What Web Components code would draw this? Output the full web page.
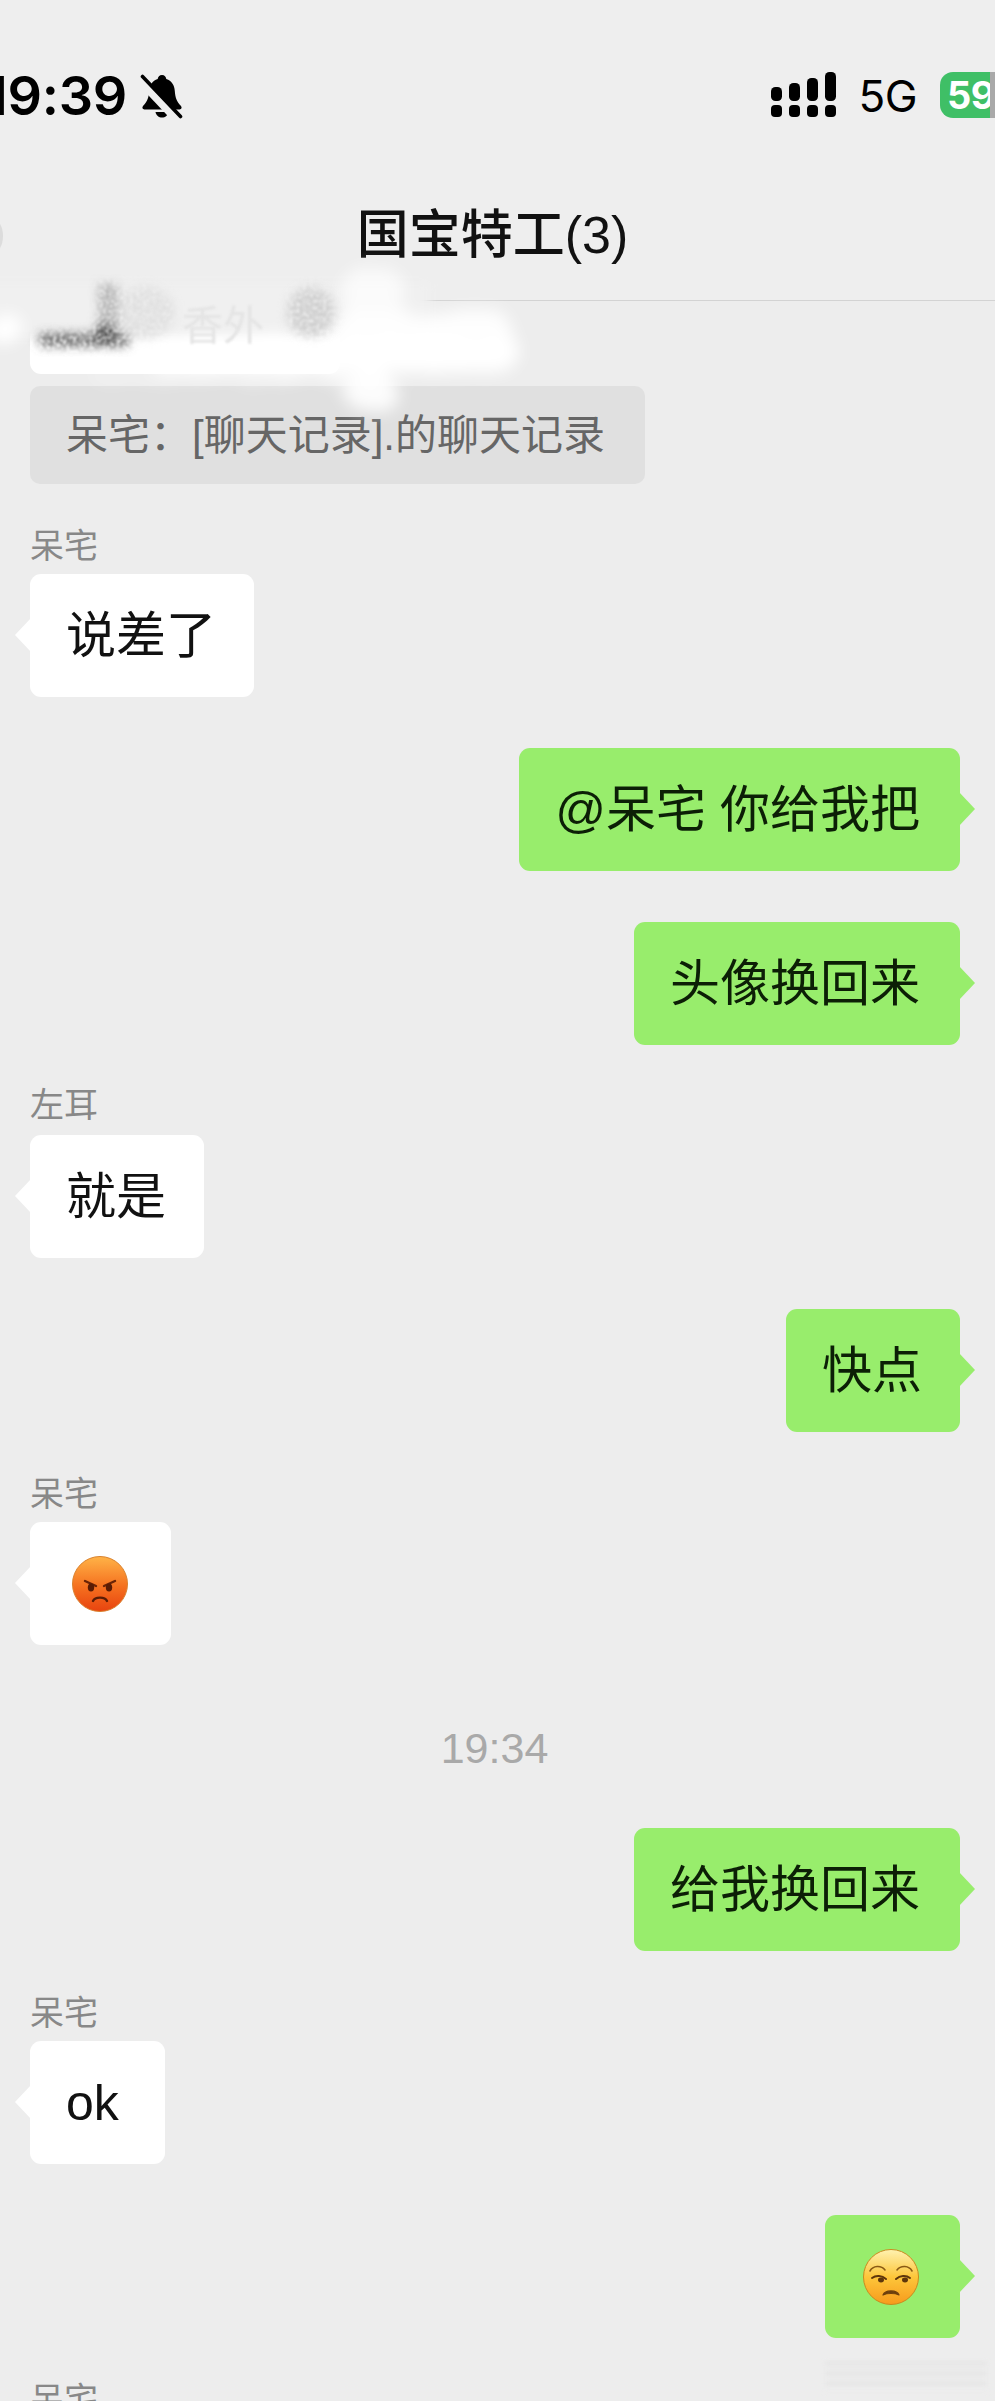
<!DOCTYPE html>
<html lang="zh">
<head>
<meta charset="utf-8">
<title>国宝特工(3)</title>
<style>
  html, body { margin: 0; background: #ededed; }
  body { font-family: "Liberation Sans", "Noto Sans CJK SC", sans-serif; }
</style>
</head>
<body>
<chat-screen>
  <status-bar slot="top"></status-bar>
  <nav-title slot="top">国宝特工(3)</nav-title>

  <chat-bubble from="them" class="notail" style="--h:73px;--w:310px;margin-top:0;height:73px"></chat-bubble>
  <quote-line>呆宅：[聊天记录].的聊天记录</quote-line>

  <sender-name>呆宅</sender-name>
  <chat-bubble from="them" class="first">说差了</chat-bubble>

  <chat-bubble from="me">@呆宅 你给我把</chat-bubble>
  <chat-bubble from="me">头像换回来</chat-bubble>

  <sender-name style="margin-top:40px">左耳</sender-name>
  <chat-bubble from="them" class="first" style="margin-top:10px">就是</chat-bubble>

  <chat-bubble from="me" style="--w:174px;--pl:36px">快点</chat-bubble>

  <sender-name>呆宅</sender-name>
  <chat-bubble from="them" class="first" style="--w:141px"><face-emoji kind="angry"></face-emoji></chat-bubble>

  <time-mark>19:34</time-mark>

  <chat-bubble from="me" style="margin-top:57px">给我换回来</chat-bubble>

  <sender-name>呆宅</sender-name>
  <chat-bubble from="them" class="first" style="--w:135px">ok</chat-bubble>

  <chat-bubble from="me" style="--w:135px"><face-emoji kind="unamused"></face-emoji></chat-bubble>

  <sender-name>呆宅</sender-name>
</chat-screen>

<script>
const CJK = '"Liberation Sans", "Noto Sans CJK SC", sans-serif';

class ChatScreen extends HTMLElement {
  constructor() {
    super();
    this.attachShadow({ mode: "open" });
    this.shadowRoot.innerHTML = `
      <style>
        :host { display:block; position:relative; width:995px; height:2401px; overflow:hidden; background:#ededed; font-family:${CJK}; }
        .back { position:absolute; left:-17px; top:219px; width:20px; height:34px; border-radius:50%; background:#dcdcdc; }
        .list { display:flex; flex-direction:column; align-items:stretch; padding:0 20px 0 30px; }
        .smudge { position:absolute; left:0; top:200px; width:620px; height:230px; pointer-events:none; }
        .ghost { position:absolute; left:182px; top:292px; font-size:41px; color:#e4e4e4; filter:blur(1px); white-space:nowrap; }
        .footmark { position:absolute; left:825px; top:2362px; width:162px; height:30px; background:repeating-linear-gradient(#e0e0e0 0 3px, #ececec 3px 10px); filter:blur(2px); opacity:.7; }
      </style>
      <div class="back"></div>
      <slot name="top"></slot>
      <div class="list"><slot></slot></div>
      <svg class="smudge" viewBox="0 200 620 230" xmlns="http://www.w3.org/2000/svg">
        <defs>
          <filter id="speck" x="-15%" y="-15%" width="130%" height="130%">
            <feGaussianBlur in="SourceGraphic" stdDeviation="5" result="b"/>
            <feTurbulence type="fractalNoise" baseFrequency=".3" numOctaves="2" seed="7" result="n"/>
            <feColorMatrix in="n" type="matrix" values="0 0 0 0 0  0 0 0 0 0  0 0 0 0 0  0 0 0 2.500 -.500" result="mask"/>
            <feComposite in="b" in2="mask" operator="in"/>
            <feGaussianBlur stdDeviation="1"/>
          </filter>
          <filter id="soft" x="-30%" y="-80%" width="160%" height="260%">
            <feTurbulence type="fractalNoise" baseFrequency=".04" numOctaves="3" seed="9" result="n"/>
            <feDisplacementMap in="SourceGraphic" in2="n" scale="18" xChannelSelector="R" yChannelSelector="G"/>
            <feGaussianBlur stdDeviation="8"/>
          </filter>
          <filter id="haze"><feGaussianBlur stdDeviation="5"/></filter>
        </defs>
        <rect x="-20" y="282" width="450" height="56" fill="#f0f0f0" filter="url(#haze)"/>
        <g filter="url(#soft)" fill="#fff">
          <rect x="-12" y="318" width="36" height="24" rx="12"/>
          <rect x="150" y="336" width="370" height="36" rx="16"/>
          <rect x="330" y="312" width="180" height="40" rx="18" opacity=".9"/>
          <ellipse cx="372" cy="292" rx="34" ry="26" opacity=".7"/>
          <ellipse cx="372" cy="392" rx="28" ry="24" opacity=".9"/>
          <rect x="90" y="372" width="300" height="10" opacity=".35"/>
        </g>
        <rect x="36" y="345" width="290" height="18" fill="#fff" filter="url(#haze)"/>
        <g filter="url(#speck)">
          <ellipse cx="145" cy="312" rx="30" ry="26" fill="#e0e0e0"/>
          <rect x="98" y="284" width="20" height="48" fill="#b4b4b4"/>
          <rect x="38" y="333" width="92" height="14" rx="6" fill="#6a6a6a"/>
          <rect x="96" y="324" width="20" height="20" fill="#444"/>
          <ellipse cx="311" cy="312" rx="24" ry="25" fill="#cfcfcf"/>
        </g>
      </svg>
      <div class="ghost">香外</div>
      <div class="footmark"></div>
    `;
  }
}

class StatusBar extends HTMLElement {
  constructor() {
    super();
    this.attachShadow({ mode: "open" });
    this.shadowRoot.innerHTML = `
      <style>
        :host { display:flex; align-items:center; height:190px; box-sizing:border-box; padding-top:2px; color:#000; background:#eee; font-family:Inter, sans-serif; }
        .clock { font-size:54px; font-weight:600; line-height:1; margin-left:-15px; letter-spacing:-.3px; }
        .bell { width:44px; height:46px; margin-left:13px; }
        .right { margin-left:auto; display:flex; align-items:center; overflow:hidden; margin-top:-2px; }
        .signal { width:66px; height:46px; }
        .net { font-size:44px; line-height:1; margin:2px 23px 0 21px; letter-spacing:-.5px; }
        .batt { width:55px; height:46px; flex:none; box-sizing:border-box; background:#3fbf66; border-radius:13px 0 0 13px; border-right:5px solid #a9a9a9; color:#fff; font-size:38px; font-weight:700; line-height:46px; padding-left:7px; overflow:hidden; white-space:nowrap; letter-spacing:-.5px; }
      </style>
      <span class="clock">19:39</span>
      <svg class="bell" viewBox="0 0 44 46" xmlns="http://www.w3.org/2000/svg">
        <path d="M22 2c2.600 0 4 1.800 4.300 4 5.400 1.700 8 6 8.500 12 .5 6 1.500 10.500 6.200 15 1.200 1.500.6 3.400-1.400 3.400H4.400C2.400 36.400 1.800 34.500 3 33c4.700-4.500 5.700-9 6.200-15C9.700 12 12.300 7.700 17.700 6 18 3.800 19.400 2 22 2z" fill="#000"/>
        <path d="M15.500 39h13c-.6 3.500-3.200 5.500-6.500 5.500s-5.900-2-6.500-5.500z" fill="#000"/>
        <path d="M0 7l36 38" stroke="#eee" stroke-width="9" fill="none"/>
        <path d="M2.500 3.500l38 40" stroke="#000" stroke-width="3.600" stroke-linecap="round" fill="none"/>
      </svg>
      <div class="right">
        <svg class="signal" viewBox="0 0 66 46" xmlns="http://www.w3.org/2000/svg" fill="#000">
          <rect x="0" y="33" width="11" height="12" rx="4"/><rect x="18" y="33" width="11" height="12" rx="4"/><rect x="36" y="33" width="11" height="12" rx="4"/><rect x="54" y="33" width="11" height="12" rx="4"/>
          <rect x="0" y="15" width="11" height="14" rx="4.500"/><rect x="18" y="11" width="11" height="18" rx="4.500"/><rect x="36" y="6" width="11" height="23" rx="4.500"/><rect x="54" y="0" width="11" height="29" rx="4.500"/>
        </svg>
        <span class="net">5G</span>
        <span class="batt">59</span>
      </div>
    `;
  }
}

class NavTitle extends HTMLElement {
  constructor() {
    super();
    this.attachShadow({ mode: "open" });
    this.shadowRoot.innerHTML = `
      <style>
        :host { display:flex; justify-content:center; box-sizing:border-box; height:111px; padding:15px 10px 0 0; border-bottom:1px solid #d3d3d3; background:#eee; color:#111; font-size:52px; font-weight:500; line-height:60px; }
      </style>
      <slot></slot>
    `;
  }
}

class ChatBubble extends HTMLElement {
  constructor() {
    super();
    this.attachShadow({ mode: "open" });
    this.shadowRoot.innerHTML = `
      <style>
        :host { display:flex; margin-top:51px; position:relative; font-size:50px; line-height:60px; color:#111; }
        :host(.first) { margin-top:8px; }
        :host([from="me"]) { justify-content:flex-end; padding-right:15px; color:#0c1f06; }
        .box { position:relative; box-sizing:border-box; width:var(--w, auto); height:var(--h, 123px); display:flex; align-items:center; padding:0 38px 0 36px; border-radius:11px; background:#fff; white-space:nowrap; }
        :host([from="me"]) .box { background:#98ed6c; padding:0 40px 0 var(--pl, 36px); }
        .box::after { content:""; position:absolute; top:44px; left:-15px; width:16px; height:34px; background:#fff; clip-path:polygon(100% 0, 0 50%, 100% 100%); }
        :host([from="me"]) .box::after { left:auto; right:-15px; background:#98ed6c; clip-path:polygon(0 0, 100% 50%, 0 100%); }
        :host(.notail) .box::after { display:none; }
      </style>
      <div class="box"><slot></slot></div>
    `;
  }
}

class QuoteLine extends HTMLElement {
  constructor() {
    super();
    this.attachShadow({ mode: "open" });
    this.shadowRoot.innerHTML = `
      <style>
        :host { display:flex; align-items:center; box-sizing:border-box; width:615px; height:98px; margin-top:12px; padding:0 0 7px 36px; border-radius:10px; background:#e0e0e0; color:#666; font-size:42px; white-space:nowrap; }
      </style>
      <slot></slot>
    `;
  }
}

class SenderName extends HTMLElement {
  constructor() {
    super();
    this.attachShadow({ mode: "open" });
    this.shadowRoot.innerHTML = `
      <style>
        :host { display:block; height:40px; margin-top:42px; color:#888; font-size:34px; line-height:40px; white-space:nowrap; }
      </style>
      <slot></slot>
    `;
  }
}

class TimeMark extends HTMLElement {
  constructor() {
    super();
    this.attachShadow({ mode: "open" });
    this.shadowRoot.innerHTML = `
      <style>
        :host { display:block; height:46px; margin-top:80px; padding-right:16px; text-align:center; color:#a9a9a9; font-size:43px; line-height:46px; }
      </style>
      <slot></slot>
    `;
  }
}

class FaceEmoji extends HTMLElement {
  constructor() {
    super();
    this.attachShadow({ mode: "open" });
    const angry = this.getAttribute("kind") === "angry";
    const art = angry ? `
      <defs><linearGradient id="f" x1="0" y1="0" x2="0" y2="1"><stop offset="0" stop-color="#ffb347"/><stop offset=".55" stop-color="#f5701f"/><stop offset="1" stop-color="#e8430f"/></linearGradient></defs>
      <circle cx="28" cy="28" r="27.500" fill="url(#f)" stroke="#d9822f" stroke-width="1"/>
      <path d="M13 25l11 5M43 25l-11 5" stroke="#6b2306" stroke-width="2.400" stroke-linecap="round" fill="none"/>
      <ellipse cx="19" cy="31.500" rx="3.200" ry="4" fill="#5a1c05"/><ellipse cx="37" cy="31.500" rx="3.200" ry="4" fill="#5a1c05"/>
      <path d="M21 45c2-4.500 12-4.500 14 0" stroke="#5a1c05" stroke-width="2.400" stroke-linecap="round" fill="none"/>
    ` : `
      <defs><linearGradient id="f" x1="0" y1="0" x2="0" y2="1"><stop offset="0" stop-color="#fff2b0"/><stop offset=".5" stop-color="#fdc63a"/><stop offset="1" stop-color="#f79a1c"/></linearGradient></defs>
      <circle cx="28" cy="28" r="27.500" fill="url(#f)" stroke="#c98a1e" stroke-width="1"/>
      <path d="M7 22c3-5.500 11-6 15-1M34 21c4-5 12-4.500 15 1" stroke="#8a5a14" stroke-width="1.600" stroke-linecap="round" fill="none"/>
      <path d="M9 29c4-3 10-2.500 14 1M33 30c4-3.500 10-4 14-1" stroke="#5e360b" stroke-width="2" stroke-linecap="round" fill="none"/>
      <ellipse cx="18" cy="31" rx="3" ry="2.400" fill="#5e360b"/><ellipse cx="42" cy="31" rx="3" ry="2.400" fill="#5e360b"/>
      <path d="M20 46c2-5.500 14-5.500 16 0-4-2-12-2-16 0z" fill="#6e3f0d" stroke="#6e3f0d" stroke-width="1.200" stroke-linejoin="round"/>
    `;
    this.shadowRoot.innerHTML = `
      <style>
        :host { display:block; width:56px; height:56px; margin:0 auto; }
        svg { display:block; width:56px; height:56px; }
      </style>
      <svg viewBox="0 0 56 56" xmlns="http://www.w3.org/2000/svg">${art}</svg>
    `;
  }
}

customElements.define("chat-screen", ChatScreen);
customElements.define("status-bar", StatusBar);
customElements.define("nav-title", NavTitle);
customElements.define("chat-bubble", ChatBubble);
customElements.define("quote-line", QuoteLine);
customElements.define("sender-name", SenderName);
customElements.define("time-mark", TimeMark);
customElements.define("face-emoji", FaceEmoji);
</script>
</body>
</html>
